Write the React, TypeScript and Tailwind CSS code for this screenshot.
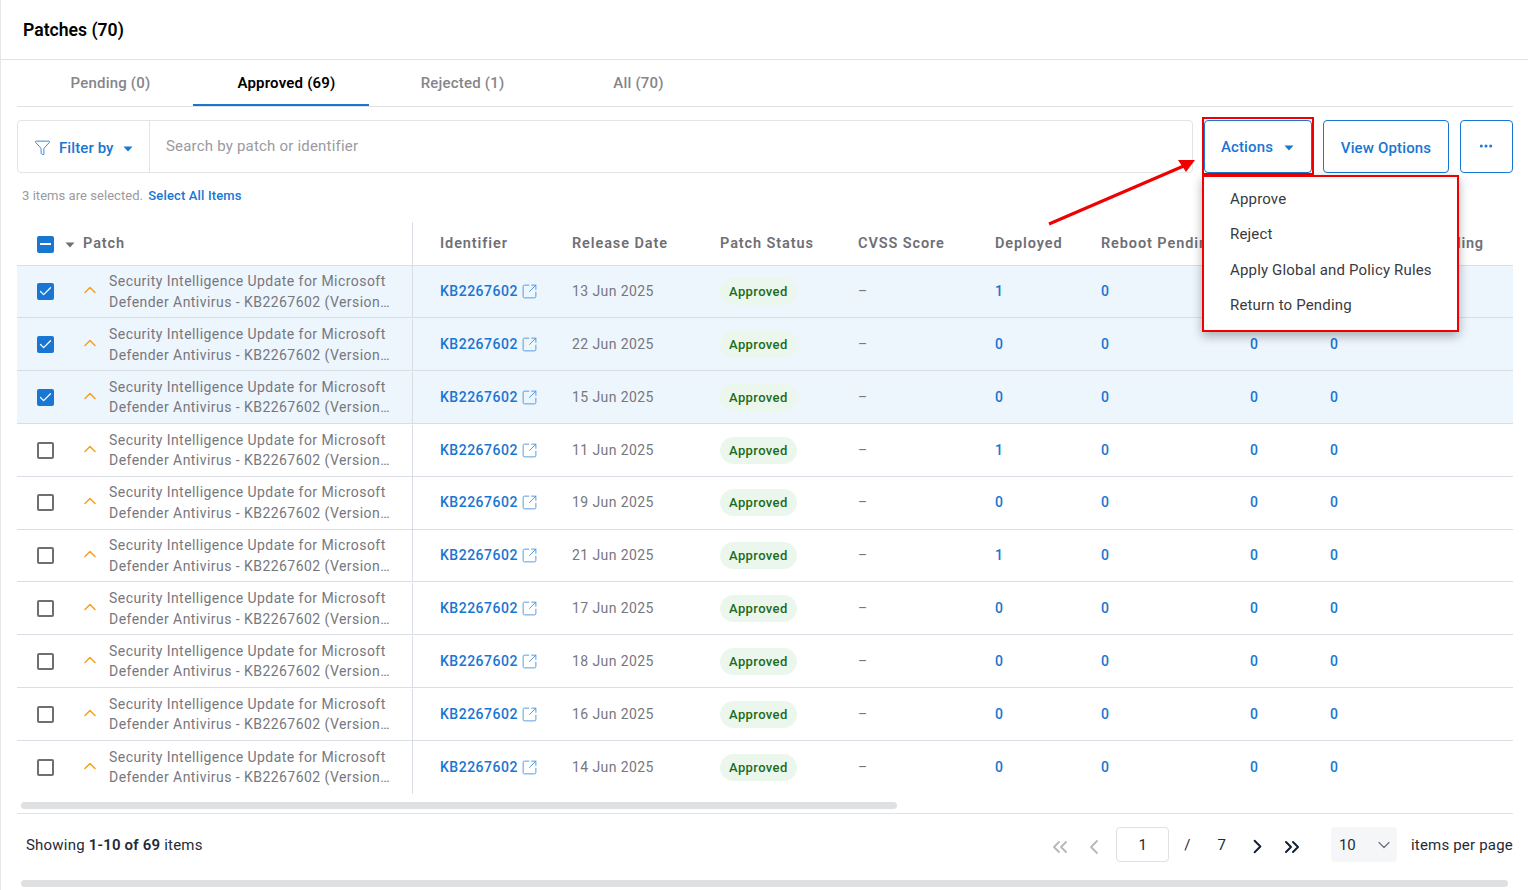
import { ChevronDown, ChevronLeft, ChevronRight, ChevronsLeft, ChevronsRight, ChevronUp, Check, Ellipsis, Funnel, SquareArrowOutUpRight } from "lucide-react";

type Row = { date: string; deployed: number; selected?: boolean };

const rows: Row[] = [
  { date: "13 Jun 2025", deployed: 1, selected: true },
  { date: "22 Jun 2025", deployed: 0, selected: true },
  { date: "15 Jun 2025", deployed: 0, selected: true },
  { date: "11 Jun 2025", deployed: 1 },
  { date: "19 Jun 2025", deployed: 0 },
  { date: "21 Jun 2025", deployed: 1 },
  { date: "17 Jun 2025", deployed: 0 },
  { date: "18 Jun 2025", deployed: 0 },
  { date: "16 Jun 2025", deployed: 0 },
  { date: "14 Jun 2025", deployed: 0 },
];

const cols = "grid grid-cols-[396px_159px_148px_138px_137px_106px_149px_80px_1fr]";

function Caret({ className }: { className: string }) {
  return (
    <svg width="10" height="6" viewBox="0 0 10 6" className={className}>
      <path d="M0.5 0.5h9L5 5.5z" fill="currentColor" />
    </svg>
  );
}

function Tab({ label, active }: { label: string; active?: boolean }) {
  return (
    <div
      className={`flex h-[46px] w-[176px] items-center justify-center pl-[11px] text-[15px] tracking-[0.2px] ${
        active ? "border-b-2 border-[#1976d2] pt-[2px] font-semibold text-black" : "font-medium text-[#85858b]"
      }`}
    >
      {label}
    </div>
  );
}

function PatchRow({ row, last }: { row: Row; last: boolean }) {
  return (
    <div
      className={`${cols} h-[52.8px] items-center pt-[0.6px] ${last ? "" : "border-b border-[#d9dee5]"} ${row.selected ? "bg-[#edf5fd]" : "bg-white"}`}
    >
      <div className="flex h-full items-center border-r border-[#d9dee5] pl-5">
        {row.selected ? (
          <span className="flex h-[17px] w-[17px] items-center justify-center rounded-[2px] bg-[#1976d2]">
            <Check size={15} strokeWidth={2} className="text-white" />
          </span>
        ) : (
          <span className="h-[17px] w-[17px] rounded-[2px] border-2 border-[#6f6f73]" />
        )}
        <ChevronUp size={20} strokeWidth={1.8} className="mb-[3px] ml-[25.5px] text-[#f5a01f]" />
        <div className="ml-[9.5px] w-[283px] whitespace-nowrap text-[14px] leading-[20.5px] tracking-[0.45px] text-[#77777e]">
          <div>Security Intelligence Update for Microsoft</div>
          <div>Defender Antivirus - KB2267602 (Version…</div>
        </div>
      </div>
      <div className="flex items-center pl-[27px] text-[14px] font-medium tracking-[0.5px] text-[#1976d2]">
        KB2267602
        <SquareArrowOutUpRight size={17} strokeWidth={1.3} className="ml-[3px] text-[#4b94de]" />
      </div>
      <div className="text-[14px] tracking-[0.4px] text-[#77777e]">{row.date}</div>
      <div>
        <span className="inline-block h-[27px] rounded-full bg-[#ebf7ec] px-[9px] pt-[5px] text-[13px] leading-[18px] font-medium tracking-[0.4px] text-[#1c6b22]">
          Approved
        </span>
      </div>
      <div className="text-[14px] text-[#77777e]">–</div>
      <div className="text-[14px] font-medium text-[#1976d2]">{row.deployed}</div>
      <div className="text-[14px] font-medium text-[#1976d2]">0</div>
      <div className="text-[14px] font-medium text-[#1976d2]">0</div>
      <div className="text-[14px] font-medium text-[#1976d2]">0</div>
    </div>
  );
}

export default function App() {
  return (
    <div className="relative h-[890px] w-[1528px] overflow-hidden border-l border-[#e6e6e8] bg-white font-['Roboto',sans-serif]">
      <div className="flex h-[60px] items-center border-b border-[#e2e2e4] pl-[22px] pt-[2px] text-[17.6px] font-semibold text-black">
        Patches (70)
      </div>

      <div className="mx-4 w-[1496px]">
        <div className="flex border-b border-[#e2e2e4]">
          <Tab label="Pending (0)" />
          <Tab label="Approved (69)" active />
          <Tab label="Rejected (1)" />
          <Tab label="All (70)" />
        </div>

        <div className="mt-[13px] flex h-[53px]">
          <div className="flex w-[1176px] rounded-[4px] border border-[#e2e4e8]">
            <div className="flex w-[132px] items-center border-r border-[#e2e4e8] pl-[16px] pt-[4px] text-[15px] font-medium tracking-[0.1px] text-[#1976d2]">
              <Funnel size={17} strokeWidth={1.2} className="mb-[3px]" />
              <span className="ml-[8px]">Filter by</span>
              <Caret className="ml-[9px] mt-[1px]" />
            </div>
            <div className="pl-4 pt-4 text-[15px] leading-[18px] tracking-[0.2px] text-[#9a9aa0]">Search by patch or identifier</div>
          </div>
          <button className="ml-[11px] flex w-[108px] items-center justify-center rounded-[4px] border border-[#1976d2] pr-[1px] pt-[2px] text-[15px] font-medium tracking-[0.15px] text-[#1976d2]">
            Actions
            <Caret className="ml-[11px]" />
          </button>
          <button className="ml-[11px] w-[126px] rounded-[4px] border border-[#1976d2] pt-[3px] text-[15px] font-medium tracking-[0.15px] text-[#1976d2]">
            View Options
          </button>
          <button className="ml-[11px] flex w-[53px] items-center justify-center rounded-[4px] border border-[#1976d2] pb-[2px] pr-[2px] text-[#1976d2]">
            <Ellipsis size={16} strokeWidth={2.5} />
          </button>
        </div>

        <div className="mt-[14px] h-[18px] pl-[5px] text-[13px] leading-[18px] tracking-[0.05px] text-[#9a9aa0]">
          3 items are selected. <span className="ml-[2px] font-medium tracking-[0.15px] text-[#1976d2]">Select All Items</span>
        </div>

        <div className={`${cols} mt-[17px] h-[43.6px] items-center border-b border-[#d9dee5] text-[14.5px] font-semibold tracking-[0.9px] text-[#6f6f76] [&>div]:pt-[1.5px]`}>
          <div className="flex h-full items-center border-r border-[#d9dee5] pl-5">
            <span className="flex h-[17px] w-[17px] items-center justify-center rounded-[2px] bg-[#1976d2]">
              <span className="h-[2px] w-[11px] bg-white" />
            </span>
            <Caret className="ml-[11px] mt-[1px] text-[#6f6f76]" />
            <span className="ml-[8px]">Patch</span>
          </div>
          <div className="pl-[27px]">Identifier</div>
          <div>Release Date</div>
          <div>Patch Status</div>
          <div>CVSS Score</div>
          <div>Deployed</div>
          <div className="whitespace-nowrap">Reboot Pending</div>
          <div>Failed</div>
          <div className="whitespace-nowrap tracking-[0.8px]">Installations Pending</div>
        </div>

        {rows.map((r, i) => (
          <PatchRow key={i} row={r} last={i === rows.length - 1} />
        ))}

        <div className="ml-1 mt-[8.4px] h-[7px] w-[876px] rounded-full bg-[#dfe0e2]" />

        <div className="mt-[4px] flex h-[67px] items-center justify-between border-t border-[#e2e2e4] pb-[4px] pl-[9px] text-[15px] tracking-[0.2px] text-[#1f2a37]">
          <div>
            Showing <span className="font-semibold">1-10 of 69</span> items
          </div>
          <div className="flex items-center tracking-normal">
            <ChevronsLeft size={24} strokeWidth={1.8} className="mt-[4px] text-[#b5b7ba]" />
            <ChevronLeft size={24} strokeWidth={1.8} className="ml-[10px] mt-[4px] text-[#b5b7ba]" />
            <div className="ml-[10px] flex h-[35px] w-[53px] items-center justify-center rounded-[4px] border border-[#e0e1e4]">1</div>
            <span className="ml-[15px]">/</span>
            <span className="ml-[27px]">7</span>
            <ChevronRight size={23} strokeWidth={2} className="ml-[20px] mt-[4px] text-[#0f2238]" />
            <ChevronsRight size={24} strokeWidth={2} className="ml-[11px] mt-[4px] text-[#0f2238]" />
            <div className="ml-[27px] flex h-[35px] w-[66px] items-center justify-between rounded-[4px] bg-[#f5f6f8] pl-2 pr-[3px] text-[15px]">
              10
              <ChevronDown size={20} strokeWidth={1.5} className="text-[#6b7280]" />
            </div>
            <span className="ml-[14px] tracking-[0.2px]">items per page</span>
          </div>
        </div>

        <div className="ml-1 h-[7px] w-[1487px] rounded-full bg-[#dfe0e2]" />
      </div>

      {/* annotations and open menu sit above the table */}
      <div className="absolute left-[1201px] top-[117px] h-[58px] w-[112px] border-2 border-[#f00000]" />
      <div className="absolute left-[1201px] top-[175px] flex h-[157px] w-[257px] flex-col justify-center gap-[14.5px] border-2 border-[#f00000] bg-white pb-[2px] pl-[26px] text-[15px] leading-[21px] tracking-[0.17px] text-[#3a3a3e] shadow-[0_4px_10px_rgba(0,0,0,0.3)]">
        <div>Approve</div>
        <div>Reject</div>
        <div>Apply Global and Policy Rules</div>
        <div>Return to Pending</div>
      </div>
      <svg className="absolute left-[1040px] top-[150px]" width="165" height="80" viewBox="0 0 165 80">
        <path d="M8 74 L145 15" stroke="#f00000" strokeWidth="3" fill="none" />
        <path d="M154 10 L137 10 L145 22 Z" fill="#f00000" />
      </svg>
    </div>
  );
}
